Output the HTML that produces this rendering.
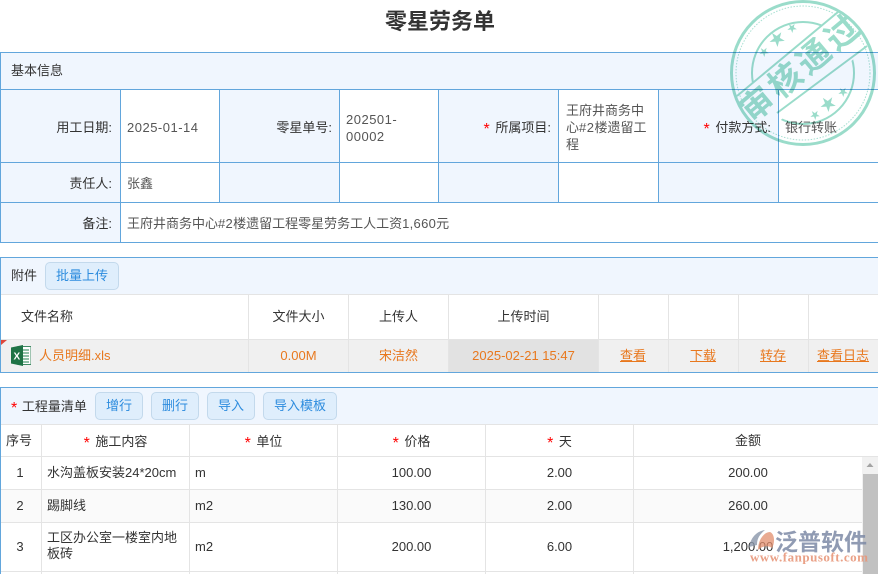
<!DOCTYPE html>
<html><head><meta charset="utf-8">
<style>
html,body{margin:0;padding:0;background:#fff;}
#p{position:relative;width:878px;height:574px;overflow:hidden;font-family:"Liberation Sans","Noto Sans CJK SC",sans-serif;font-size:13px;color:#333;}
#p div{position:absolute;box-sizing:border-box;}
.t{white-space:nowrap;line-height:16px;}
.r{text-align:right;}
.c{text-align:center;}
.v{color:#555;}
.s{color:#f00;font-size:16px;position:relative;top:2px;line-height:10px;margin-right:2px;}
.o{color:#e8781e;}
.u{text-decoration:underline;color:#e8781e;}
.b{background:#dfeefc;border:1px solid #c3d9ec;border-radius:5px;color:#2d8cde;text-align:center;line-height:26px;height:28px;white-space:nowrap;}
.lb{background:#62a6dc;}
.lg{background:#e4e4e4;}
.bg{background:#f0f6fe;}
.ls{letter-spacing:.5px;}
</style></head><body><div id="p">
<div class="t" style="left:1px;width:878px;top:8px;text-align:center;font-size:22px;line-height:28px;font-weight:bold;color:#333;">零星劳务单</div>

<!-- section 1 -->
<div class="bg" style="left:0;top:53px;width:878px;height:36px;"></div>
<div class="bg" style="left:1px;top:90px;width:119px;height:152px;"></div>
<div class="bg" style="left:220px;top:90px;width:119px;height:112px;"></div>
<div class="bg" style="left:439px;top:90px;width:119px;height:112px;"></div>
<div class="bg" style="left:659px;top:90px;width:119px;height:112px;"></div>

<div class="lb" style="left:0;top:52px;width:878px;height:1px;"></div>
<div class="lb" style="left:0;top:89px;width:878px;height:1px;"></div>
<div class="lb" style="left:0;top:162px;width:878px;height:1px;"></div>
<div class="lb" style="left:0;top:202px;width:878px;height:1px;"></div>
<div class="lb" style="left:0;top:242px;width:878px;height:1px;"></div>
<div class="lb" style="left:0;top:52px;width:1px;height:191px;"></div>
<div class="lb" style="left:120px;top:89px;width:1px;height:154px;"></div>
<div class="lb" style="left:219px;top:89px;width:1px;height:114px;"></div>
<div class="lb" style="left:339px;top:89px;width:1px;height:114px;"></div>
<div class="lb" style="left:438px;top:89px;width:1px;height:114px;"></div>
<div class="lb" style="left:558px;top:89px;width:1px;height:114px;"></div>
<div class="lb" style="left:658px;top:89px;width:1px;height:114px;"></div>
<div class="lb" style="left:778px;top:89px;width:1px;height:114px;"></div>

<div class="t" style="left:11px;top:63px;">基本信息</div>
<div class="t r" style="left:0;width:112px;top:120px;">用工日期:</div>
<div class="t v ls" style="left:127px;top:120px;">2025-01-14</div>
<div class="t r" style="left:220px;width:112px;top:120px;">零星单号:</div>
<div class="v ls" style="left:346px;top:111px;width:80px;line-height:17px;">202501-<br>00002</div>
<div class="t r" style="left:439px;width:112px;top:120px;"><span class="s">*</span> 所属项目:</div>
<div class="v" style="left:566px;top:102px;width:86px;line-height:17px;">王府井商务中心<span style="letter-spacing:.5px">#2</span>楼遗留工程</div>
<div class="t r" style="left:659px;width:112px;top:120px;"><span class="s">*</span> 付款方式:</div>
<div class="t v" style="left:785px;top:120px;">银行转账</div>
<div class="t r" style="left:0;width:112px;top:176px;">责任人:</div>
<div class="t v" style="left:127px;top:176px;">张鑫</div>
<div class="t r" style="left:0;width:112px;top:216px;">备注:</div>
<div class="t v" style="left:127px;top:216px;">王府井商务中心<span style="letter-spacing:.3px">#2</span>楼遗留工程零星劳务工人工资<span style="letter-spacing:.3px">1,660</span>元</div>

<!-- section 2 -->
<div class="bg" style="left:0;top:258px;width:878px;height:36px;"></div>
<div style="left:0;top:340px;width:878px;height:32px;background:#f0f0f0;"></div>
<div style="left:449px;top:340px;width:149px;height:32px;background:#e2e2e2;"></div>
<div class="lb" style="left:0;top:257px;width:878px;height:1px;"></div>
<div class="lb" style="left:0;top:372px;width:878px;height:1px;"></div>
<div class="lb" style="left:0;top:257px;width:1px;height:116px;"></div>
<div class="lg" style="left:1px;top:294px;width:877px;height:1px;"></div>
<div class="lg" style="left:1px;top:339px;width:877px;height:1px;"></div>
<div class="lg" style="left:248px;top:295px;width:1px;height:77px;"></div>
<div class="lg" style="left:348px;top:295px;width:1px;height:77px;"></div>
<div class="lg" style="left:448px;top:295px;width:1px;height:77px;"></div>
<div class="lg" style="left:598px;top:295px;width:1px;height:77px;"></div>
<div class="lg" style="left:668px;top:295px;width:1px;height:77px;"></div>
<div class="lg" style="left:738px;top:295px;width:1px;height:77px;"></div>
<div class="lg" style="left:808px;top:295px;width:1px;height:77px;"></div>
<div class="t" style="left:11px;top:268px;">附件</div>
<div class="b" style="left:45px;top:262px;width:74px;">批量上传</div>
<div class="t" style="left:21px;top:309px;">文件名称</div>
<div class="t c" style="left:249px;width:99px;top:309px;">文件大小</div>
<div class="t c" style="left:349px;width:99px;top:309px;">上传人</div>
<div class="t c" style="left:449px;width:149px;top:309px;">上传时间</div>
<svg style="position:absolute;left:1px;top:340px;" width="6" height="5"><path d="M0 0H6L0 5Z" fill="#e0473a"/></svg>
<svg style="position:absolute;left:11px;top:345px;" width="20" height="21" viewBox="0 0 20 21">
<path d="M7 1.500H20V19.500H7Z" fill="#fff" stroke="#3f8a63" stroke-width="1"/>
<path d="M12 5H18M12 8H18M12 11H18M12 14H18M12 17H18" stroke="#4f9c74" stroke-width="1.200"/>
<path d="M0 2.500L12 0V21L0 18.500Z" fill="#1f7345"/>
<text x="2.500" y="14.500" font-size="10" font-weight="bold" fill="#fff" font-family="Liberation Sans">X</text>
</svg>
<div class="t o" style="left:39px;top:348px;">人员明细.xls</div>
<div class="t c o" style="left:249px;width:99px;top:348px;">0.00M</div>
<div class="t c o" style="left:349px;width:99px;top:348px;">宋洁然</div>
<div class="t c o" style="left:449px;width:149px;top:348px;">2025-02-21 15:47</div>
<div class="t u" style="left:620px;top:348px;">查看</div>
<div class="t u" style="left:690px;top:348px;">下载</div>
<div class="t u" style="left:760px;top:348px;">转存</div>
<div class="t u" style="left:817px;top:348px;">查看日志</div>

<!-- section 3 -->
<div class="bg" style="left:0;top:388px;width:878px;height:36px;"></div>
<div style="left:1px;top:490px;width:861px;height:32px;background:#fafafa;"></div>
<div class="lb" style="left:0;top:387px;width:878px;height:1px;"></div>
<div class="lb" style="left:0;top:387px;width:1px;height:187px;"></div>
<div class="lg" style="left:1px;top:424px;width:877px;height:1px;"></div>
<div class="lg" style="left:1px;top:456px;width:877px;height:1px;"></div>
<div class="lg" style="left:1px;top:489px;width:861px;height:1px;"></div>
<div class="lg" style="left:1px;top:522px;width:861px;height:1px;"></div>
<div class="lg" style="left:1px;top:571px;width:861px;height:1px;"></div>
<div class="lg" style="left:41px;top:425px;width:1px;height:149px;"></div>
<div class="lg" style="left:189px;top:425px;width:1px;height:149px;"></div>
<div class="lg" style="left:337px;top:425px;width:1px;height:149px;"></div>
<div class="lg" style="left:485px;top:425px;width:1px;height:149px;"></div>
<div class="lg" style="left:633px;top:425px;width:1px;height:149px;"></div>
<div class="t" style="left:11px;top:399px;"><span class="s" style="margin-right:1px">*</span> 工程量清单</div>
<div class="b" style="left:95px;top:392px;width:48px;">增行</div>
<div class="b" style="left:151px;top:392px;width:48px;">删行</div>
<div class="b" style="left:207px;top:392px;width:48px;">导入</div>
<div class="b" style="left:263px;top:392px;width:74px;">导入模板</div>
<div class="t c" style="left:0;width:38px;top:433px;">序号</div>
<div class="t c" style="left:42px;width:147px;top:434px;"><span class="s">*</span> 施工内容</div>
<div class="t c" style="left:190px;width:147px;top:434px;"><span class="s">*</span> 单位</div>
<div class="t c" style="left:338px;width:147px;top:434px;"><span class="s">*</span> 价格</div>
<div class="t c" style="left:486px;width:147px;top:434px;"><span class="s">*</span> 天</div>
<div class="t c" style="left:634px;width:228px;top:433px;">金额</div>

<div class="t c" style="left:1px;width:38px;top:465px;">1</div>
<div class="t" style="left:47px;top:465px;">水沟盖板安装24*20cm</div>
<div class="t" style="left:195px;top:465px;">m</div>
<div class="t c" style="left:338px;width:147px;top:465px;">100.00</div>
<div class="t c" style="left:486px;width:147px;top:465px;">2.00</div>
<div class="t c" style="left:634px;width:228px;top:465px;">200.00</div>

<div class="t c" style="left:1px;width:38px;top:498px;">2</div>
<div class="t" style="left:47px;top:498px;">踢脚线</div>
<div class="t" style="left:195px;top:498px;">m2</div>
<div class="t c" style="left:338px;width:147px;top:498px;">130.00</div>
<div class="t c" style="left:486px;width:147px;top:498px;">2.00</div>
<div class="t c" style="left:634px;width:228px;top:498px;">260.00</div>

<div class="t c" style="left:1px;width:38px;top:539px;">3</div>
<div style="left:47px;top:530px;width:136px;line-height:16px;">工区办公室一楼室内地板砖</div>
<div class="t" style="left:195px;top:539px;">m2</div>
<div class="t c" style="left:338px;width:147px;top:539px;">200.00</div>
<div class="t c" style="left:486px;width:147px;top:539px;">6.00</div>
<div class="t c" style="left:634px;width:228px;top:539px;">1,200.00</div>

<!-- scrollbar -->
<div style="left:862px;top:457px;width:16px;height:117px;background:#f1f1f1;"></div>
<div style="left:863px;top:474px;width:15px;height:100px;background:#c1c1c1;"></div>
<svg style="position:absolute;left:862px;top:457px;" width="16" height="16"><path d="M4.500 10L8 6L11.500 10Z" fill="#a3a3a3"/></svg>

<!-- stamp -->
<svg style="position:absolute;left:725px;top:0;mix-blend-mode:multiply;" width="153" height="150" viewBox="725 0 153 150" fill="none">
<defs>
<mask id="m" maskUnits="userSpaceOnUse" x="725" y="0" width="153" height="150">
<rect x="725" y="0" width="153" height="150" fill="#fff"/>
<polygon points="737,96 838,12 868,47 776,124" fill="#000"/>
</mask>
<path id="st" d="M0 -1L.225 -.309L.951 -.309L.363 .118L.588 .809L0 .382L-.588 .809L-.363 .118L-.951 -.309L-.225 -.309Z" fill="#9adcca"/>
</defs>
<circle cx="803" cy="73" r="71.500" stroke="#9adcca" stroke-width="3"/>
<circle cx="803" cy="73" r="67" stroke="#a8e0d2" stroke-width="1" stroke-dasharray="1.500 1.500"/>
<circle cx="803" cy="73" r="51" stroke="#9adcca" stroke-width="2" mask="url(#m)"/>
<path d="M737 96L838 12M777 113L867 46" stroke="#9adcca" stroke-width="2"/>
<use href="#st" transform="translate(777 39) rotate(-40) scale(8)"/>
<use href="#st" transform="translate(792 28) rotate(-40) scale(5)"/>
<use href="#st" transform="translate(764 52) rotate(-40) scale(5)"/>
<use href="#st" transform="translate(828 104) rotate(-40) scale(8)"/>
<use href="#st" transform="translate(815 115) rotate(-40) scale(5)"/>
<use href="#st" transform="translate(843 92) rotate(-40) scale(5)"/>
<text x="0" y="0" transform="translate(808.500 76) rotate(-40)" text-anchor="middle" font-size="33" font-weight="bold" fill="#9adcca" font-family="Liberation Sans,Noto Sans CJK SC,sans-serif" letter-spacing="4">审核通过</text>
</svg>

<!-- watermark logo -->
<svg style="position:absolute;left:745px;top:527px;" width="133" height="47" viewBox="745 527 133 47">
<path d="M749 547C751 537 757 531 765 530C759 535 757 539 757 545Z" fill="#8a96aa" fill-opacity=".8"/>
<path d="M758 550C758 540 764 532 770 532C775 534 775 543 772 548C768 545 762 546 758 550Z" fill="#e28d6c" fill-opacity=".75"/>
<text x="775" y="550" font-size="23" fill="#7c8aa6" fill-opacity=".85" font-weight="bold" font-family="Liberation Sans,Noto Sans CJK SC,sans-serif" textLength="92">泛普软件</text>
<text x="750" y="561.500" font-size="13" font-weight="bold" fill="#e8977a" fill-opacity=".9" font-family="Liberation Serif,serif" textLength="118">www.fanpusoft.com</text>
</svg>
</div></body></html>
